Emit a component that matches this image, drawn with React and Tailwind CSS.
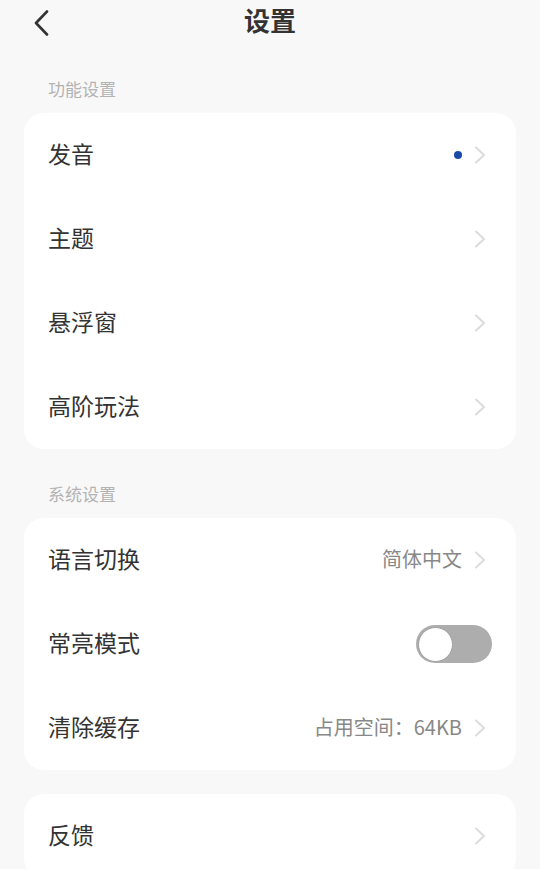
import { useState } from 'react';

const Chevron = () => (
  <svg width="18" height="18" viewBox="0 0 18 18" fill="none" className="shrink-0">
    <path d="M2 1.5 L10 9 L2 16.5" stroke="#dcdcdc" strokeWidth="2" strokeLinecap="round" strokeLinejoin="round" />
  </svg>
);

function Row({ label, children }) {
  return (
    <div className="h-[84px] flex items-center justify-between pl-6 pr-6">
      <span className="text-[23px] text-[#333333] leading-none mb-1">{label}</span>
      <div className="flex items-center">{children}</div>
    </div>
  );
}

function Section({ title }) {
  return (
    <div className="pt-[34px] pb-[13px] pl-12 text-[17px] leading-[22px] text-[#b3b3b3]">{title}</div>
  );
}

export default function App() {
  const [alwaysOn, setAlwaysOn] = useState(false);

  return (
    <div
      className="min-h-screen bg-[#f8f8f8] pb-6"
      style={{ fontFamily: '"Noto Sans CJK SC", "Noto Sans", sans-serif' }}
    >
      {/* Header */}
      <div className="relative h-11 flex items-center justify-center">
        <button className="absolute left-[34px] top-[10px]">
          <svg width="16" height="26" viewBox="0 0 16 26" fill="none">
            <path d="M13 1.5 L2 13 L13 24.5" stroke="#333333" strokeWidth="2.6" strokeLinecap="round" strokeLinejoin="round" />
          </svg>
        </button>
        <h1 className="text-[26px] font-bold text-[#333333] leading-none mb-1">设置</h1>
      </div>

      <Section title="功能设置" />
      <div className="mx-6 bg-white rounded-[20px]">
        <Row label="发音">
          <span className="w-2 h-2 rounded-full bg-[#1a4aa8] mr-3" />
          <Chevron />
        </Row>
        <Row label="主题"><Chevron /></Row>
        <Row label="悬浮窗"><Chevron /></Row>
        <Row label="高阶玩法"><Chevron /></Row>
      </div>

      <Section title="系统设置" />
      <div className="mx-6 bg-white rounded-[20px]">
        <Row label="语言切换">
          <span className="text-[20px] text-[#888888] mr-3 mb-0.5">简体中文</span>
          <Chevron />
        </Row>
        <Row label="常亮模式">
          <button
            onClick={() => setAlwaysOn(!alwaysOn)}
            className={`w-[76px] h-[38px] rounded-full flex items-center px-[1.5px] ${alwaysOn ? 'bg-[#1a4aa8] justify-end' : 'bg-[#adadad] justify-start'}`}
          >
            <span className="w-[35px] h-[35px] rounded-full bg-white border-[1.5px] border-[#a0a0a0]" />
          </button>
        </Row>
        <Row label="清除缓存">
          <span className="text-[20px] text-[#888888] mr-3 mb-0.5">占用空间：64KB</span>
          <Chevron />
        </Row>
      </div>

      <div className="mx-6 mt-6 bg-white rounded-[20px]">
        <Row label="反馈"><Chevron /></Row>
      </div>
    </div>
  );
}
